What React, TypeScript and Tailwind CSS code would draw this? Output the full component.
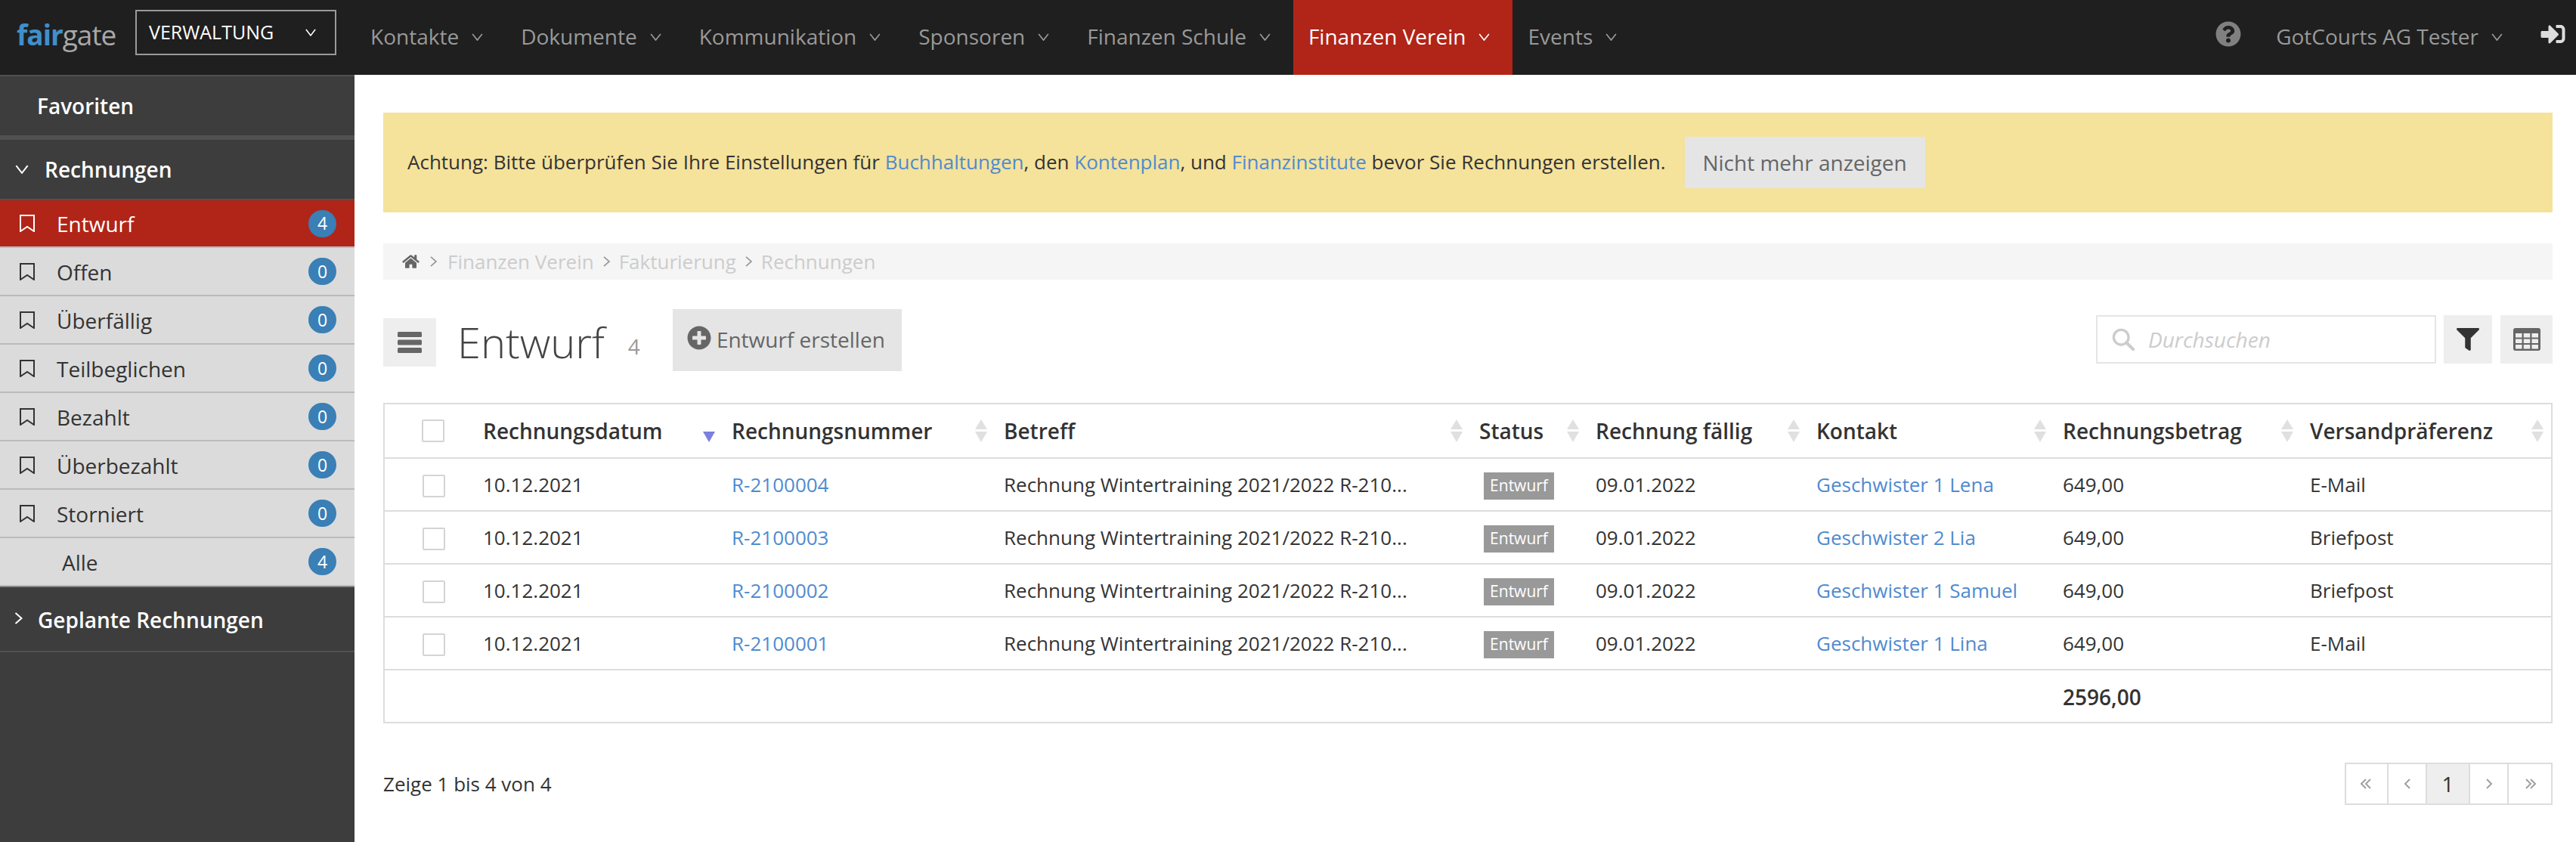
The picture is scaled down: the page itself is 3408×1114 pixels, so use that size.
import React from 'react';
import { FaHome, FaPlusCircle, FaFilter, FaQuestionCircle, FaSignInAlt } from 'react-icons/fa';

const NAV = ['Kontakte', 'Dokumente', 'Kommunikation', 'Sponsoren', 'Finanzen Schule', 'Finanzen Verein', 'Events'];

const SIDE = [
  { label: 'Entwurf', count: 4, active: true },
  { label: 'Offen', count: 0 },
  { label: 'Überfällig', count: 0 },
  { label: 'Teilbeglichen', count: 0 },
  { label: 'Bezahlt', count: 0 },
  { label: 'Überbezahlt', count: 0 },
  { label: 'Storniert', count: 0 },
];

const COLS = ['Rechnungsdatum', 'Rechnungsnummer', 'Betreff', 'Status', 'Rechnung fällig', 'Kontakt', 'Rechnungsbetrag', 'Versandpräferenz'];

const ROWS = [
  { nr: 'R-2100004', kontakt: 'Geschwister 1 Lena', versand: 'E-Mail' },
  { nr: 'R-2100003', kontakt: 'Geschwister 2 Lia', versand: 'Briefpost' },
  { nr: 'R-2100002', kontakt: 'Geschwister 1 Samuel', versand: 'Briefpost' },
  { nr: 'R-2100001', kontakt: 'Geschwister 1 Lina', versand: 'E-Mail' },
];

const GRID = 'grid grid-cols-[130px_329px_360px_629px_154px_292px_326px_327px_1fr] items-center';

function Caret({ className }: { className?: string }) {
  return (
    <svg viewBox="0 0 16 11" className={className} fill="none" stroke="currentColor" strokeWidth="1.8">
      <polyline points="1,1 8,10 15,1" />
    </svg>
  );
}

function Chevron({ className }: { className?: string }) {
  return (
    <svg viewBox="0 0 10 16" className={className} fill="none" stroke="currentColor" strokeWidth="2">
      <polyline points="1,1 9,8 1,15" />
    </svg>
  );
}

function Bookmark({ className }: { className?: string }) {
  return (
    <svg viewBox="0 0 20 23" className={className} fill="none" stroke="currentColor" strokeWidth="2">
      <path d="M1 1h18v21l-9-6-9 6z" />
    </svg>
  );
}

function Sort({ active }: { active?: boolean }) {
  return (
    <svg viewBox="0 0 16 30" className="w-[16px] h-[30px] shrink-0">
      {!active && <polygon points="8,0 16,13 0,13" fill="#e0e0e0" />}
      <polygon points="0,16 16,16 8,30" fill={active ? '#7b7fdd' : '#e0e0e0'} />
    </svg>
  );
}

function Badge({ n }: { n: number }) {
  return (
    <span className="w-[37px] h-[36px] rounded-full bg-[#3a7fb5] text-white text-[23px] flex items-center justify-center">{n}</span>
  );
}

function Checkbox() {
  return <div className="w-[30px] h-[30px] border-2 border-[#d4d4d4] rounded-[2px] bg-white"></div>;
}

function PageArrow({ points, double }: { points: string; double?: boolean }) {
  return (
    <svg viewBox="0 0 16 14" className="w-[16px] h-[14px]" fill="none" stroke="#a0a0a0" strokeWidth="2">
      <polyline points={points} />
      {double && <polyline points={points} transform={points.startsWith('7') ? 'translate(6 0)' : 'translate(-6 0)'} />}
    </svg>
  );
}

export default function App() {
  return (
    <div className="w-[3408px] h-[1114px] overflow-hidden flex flex-col bg-white text-[#333] font-['Open_Sans',sans-serif]">
      {/* Top bar */}
      <header className="h-[99px] shrink-0 bg-[#1f1f1f] flex">
        <div className="w-[179px] pl-[22px] pt-[22px] text-[37px] leading-[48px] font-medium tracking-[-1px] shrink-0">
          <span className="text-[#3f8fcb] font-bold">fair</span>
          <span className="text-[#a8a8a8]">gate</span>
        </div>
        <div className="mt-[13px] w-[266px] h-[60px] border-2 border-[#9a9a9a] flex items-center justify-between pl-[16px] pr-[25px] text-white text-[25px] shrink-0">
          VERWALTUNG
          <Caret className="w-[14px] h-[10px]" />
        </div>
        <nav className="flex ml-[25px]">
          {NAV.map((n) => (
            <div
              key={n}
              className={`h-full flex items-center pl-[20px] pr-[30px] pb-[3px] text-[28px] ${n === 'Finanzen Verein' ? 'bg-[#b12418] text-white' : 'text-[#999]'}`}
            >
              {n}
              <Caret className="w-[15px] h-[10px] ml-[17px] mt-[2px]" />
            </div>
          ))}
        </nav>
        <div className="ml-auto flex items-center pr-[13px] pb-[3px] text-[#999] text-[28px]">
          <FaQuestionCircle className="w-[34px] h-[34px] text-[#808080] mb-[6px]" />
          <span className="ml-[46px]">GotCourts AG Tester</span>
          <Caret className="w-[15px] h-[10px] ml-[17px] mt-[2px]" />
          <FaSignInAlt className="w-[35px] h-[32px] ml-[49px] mb-[6px] text-[#ddd]" />
        </div>
      </header>

      <div className="flex flex-1 min-h-0">
        {/* Sidebar */}
        <aside className="w-[469px] shrink-0 bg-[#3d3d3d] text-[28px]">
          <div className="h-[86px] border-t-2 border-b-[6px] border-[#515151] flex items-center pl-[49px] text-white font-semibold">Favoriten</div>
          <div className="h-[80px] border-b-2 border-[#515151] flex items-center pl-[20px] text-white font-semibold">
            <Caret className="w-[18px] h-[12px] mr-[21px]" />
            Rechnungen
          </div>
          {SIDE.map((s) => (
            <div
              key={s.label}
              className={`${s.active ? 'h-[63px] bg-[#b12418] text-white' : 'h-[64px] bg-[#dbdbdb] text-[#333]'} flex items-center pl-[26px] pr-[24px] border-b-2 border-[#bbb]`}
            >
              <Bookmark className="w-[20px] h-[23px] mr-[29px]" />
              <span className="flex-1 pt-[1px]">{s.label}</span>
              <Badge n={s.count} />
            </div>
          ))}
          <div className="h-[64px] flex items-center pl-[82px] pr-[24px] bg-[#dbdbdb] text-[#333] border-b-2 border-[#bbb]">
            <span className="flex-1 pt-[1px]">Alle</span>
            <Badge n={4} />
          </div>
          <div className="h-[87px] border-t-2 border-b-2 border-[#515151] flex items-center pl-[19px] text-white font-semibold">
            <Chevron className="w-[11px] h-[16px] mr-[20px] mb-[4px]" />
            Geplante Rechnungen
          </div>
        </aside>

        {/* Main */}
        <main className="flex-1 min-w-0 pl-[38px] pr-[31px] text-[26px]">
          <div className="mt-[50px] h-[132px] bg-[#f5e29b] flex items-center pl-[32px] text-[#333]">
            <span className="pb-[2px]">
              Achtung: Bitte überprüfen Sie Ihre Einstellungen für <a className="text-[#4f8bd0]">Buchhaltungen</a>, den <a className="text-[#4f8bd0]">Kontenplan</a>, und <a className="text-[#4f8bd0]">Finanzinstitute</a> bevor Sie Rechnungen erstellen.
            </span>
            <button className="ml-[25px] w-[318px] h-[68px] bg-[#e5e5e5] text-[#666] text-[28px]">Nicht mehr anzeigen</button>
          </div>

          <div className="mt-[41px] h-[48px] bg-[#f5f5f5] flex items-center pl-[25px] text-[#ccc]">
            <FaHome className="w-[23px] h-[20px] text-[#666]" />
            <Chevron className="w-[9px] h-[14px] mx-[14px] text-[#999]" />
            <span>Finanzen Verein</span>
            <Chevron className="w-[9px] h-[14px] mx-[12px] text-[#999]" />
            <span>Fakturierung</span>
            <Chevron className="w-[9px] h-[14px] mx-[12px] text-[#999]" />
            <span>Rechnungen</span>
          </div>

          {/* Title row */}
          <div className="mt-[39px] h-[82px] flex items-start">
            <button className="mt-[12px] w-[70px] h-[64px] bg-[#eee] flex items-center justify-center">
              <svg viewBox="0 0 32 28" className="w-[32px] h-[28px]" fill="#666">
                <rect x="0" y="0" width="32" height="7" rx="1.5" />
                <rect x="0" y="10.5" width="32" height="7" rx="1.5" />
                <rect x="0" y="21" width="32" height="7" rx="1.5" />
              </svg>
            </button>
            <h1 className="ml-[28px] mt-[3px] text-[56px] leading-[80px] font-light text-[#444]">Entwurf</h1>
            <span className="ml-[31px] mt-[28px] text-[28px] text-[#999]">4</span>
            <button className="ml-[43px] w-[303px] h-[82px] bg-[#e5e5e5] text-[#666] text-[28px] flex items-start pl-[19px] pt-[22px]">
              <FaPlusCircle className="w-[32px] h-[32px] mr-[7px] shrink-0" />
              <span className="leading-[36px]">Entwurf erstellen</span>
            </button>
            <div className="ml-auto mt-[8px] w-[450px] h-[64px] border-2 border-[#e5e5e5] flex items-center pl-[19px] text-[#ccc]">
              <svg viewBox="0 0 32 32" className="w-[30px] h-[30px]" fill="none" stroke="currentColor" strokeWidth="3.5">
                <circle cx="13" cy="13" r="10.5" />
                <line x1="21" y1="21" x2="30" y2="30" strokeLinecap="round" strokeWidth="4.5" />
              </svg>
              <span className="ml-[18px] italic text-[28px]">Durchsuchen</span>
            </div>
            <button className="ml-[10px] mt-[8px] w-[64px] h-[64px] bg-[#eee] flex items-center justify-center text-[#333]">
              <FaFilter className="w-[30px] h-[30px]" />
            </button>
            <button className="ml-[11px] mt-[8px] w-[69px] h-[64px] bg-[#eee] flex items-center justify-center">
              <svg viewBox="0 0 36 30" className="w-[36px] h-[30px]">
                <rect x="0" y="0" width="36" height="30" rx="3" fill="#666" />
                <g fill="#eee">
                  <rect x="3" y="7" width="8.5" height="5.5" />
                  <rect x="13.75" y="7" width="8.5" height="5.5" />
                  <rect x="24.5" y="7" width="8.5" height="5.5" />
                  <rect x="3" y="14.5" width="8.5" height="5.5" />
                  <rect x="13.75" y="14.5" width="8.5" height="5.5" />
                  <rect x="24.5" y="14.5" width="8.5" height="5.5" />
                  <rect x="3" y="22" width="8.5" height="5.5" />
                  <rect x="13.75" y="22" width="8.5" height="5.5" />
                  <rect x="24.5" y="22" width="8.5" height="5.5" />
                </g>
              </svg>
            </button>
          </div>

          {/* Table */}
          <div className="mt-[42px] border-2 border-[#ddd]">
            <div className={`${GRID} h-[72px] border-b-2 border-[#ddd] font-semibold text-[28px]`}>
              <div className="pl-[49px]"><Checkbox /></div>
              {COLS.map((c, i) => (
                <div key={c} className={`flex items-center justify-between ${i === 7 ? 'pr-[10px]' : 'pr-[22px]'}`}>
                  <span className="whitespace-nowrap">{c}</span>
                  <Sort active={i === 0} />
                </div>
              ))}
            </div>
            {ROWS.map((r) => (
              <div key={r.nr} className={`${GRID} h-[70px] border-b-2 border-[#ddd]`}>
                <div className="pl-[50px] pt-[4px]"><Checkbox /></div>
                <div>10.12.2021</div>
                <div className="text-[#4f8bd0]">{r.nr}</div>
                <div className="whitespace-nowrap">Rechnung Wintertraining 2021/2022 R-210...</div>
                <div className="pl-[6px]">
                  <span className="inline-flex items-center justify-center w-[93px] h-[36px] bg-[#999] text-white text-[21px]">Entwurf</span>
                </div>
                <div>09.01.2022</div>
                <div className="text-[#4f8bd0] whitespace-nowrap">{r.kontakt}</div>
                <div>649,00</div>
                <div>{r.versand}</div>
              </div>
            ))}
            <div className={`${GRID} h-[68px] font-semibold text-[28px]`}>
              <div className="col-start-8 mt-[2px]">2596,00</div>
            </div>
          </div>

          {/* Footer */}
          <div className="mt-[52px] flex items-center justify-between">
            <span>Zeige 1 bis 4 von 4</span>
            <div className="flex h-[56px] border-2 border-[#ddd]">
              <div className="w-[56px] flex items-center justify-center border-r-2 border-[#ddd]"><PageArrow points="7,1 1,7 7,13" double /></div>
              <div className="w-[51px] flex items-center justify-center border-r-2 border-[#ddd]"><PageArrow points="11,1 5,7 11,13" /></div>
              <div className="w-[57px] flex items-center justify-center border-r-2 border-[#ddd] bg-[#eee] text-[#333] text-[28px]">1</div>
              <div className="w-[51px] flex items-center justify-center border-r-2 border-[#ddd]"><PageArrow points="5,1 11,7 5,13" /></div>
              <div className="w-[56px] flex items-center justify-center"><PageArrow points="9,1 15,7 9,13" double /></div>
            </div>
          </div>
        </main>
      </div>
    </div>
  );
}
